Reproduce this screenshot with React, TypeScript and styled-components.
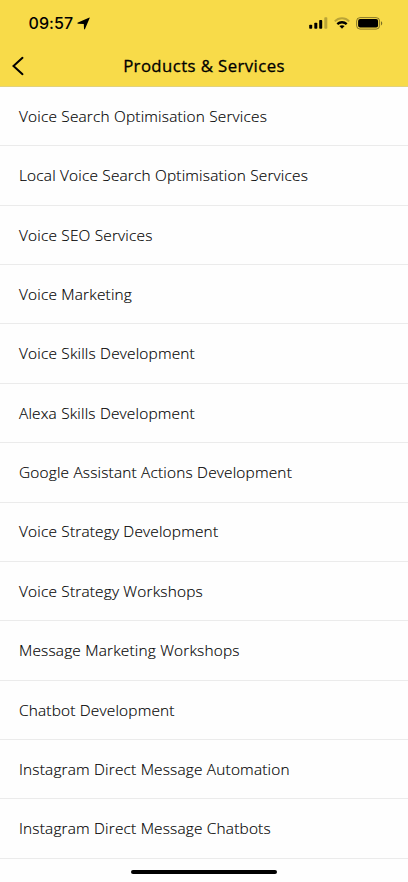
import React from "react";
import styled, { createGlobalStyle } from "styled-components";

const GlobalStyle = createGlobalStyle`
  * { box-sizing: border-box; }
  html, body { margin: 0; padding: 0; background: #fefefe; }
  body { font-family: "Open Sans", "Noto Sans", sans-serif; color: #000; }
`;

const Screen = styled.div`
  display: flex;
  flex-direction: column;
  width: 408px;
  height: 882px;
  overflow: hidden;
  background: #fefefe;
`;

const Header = styled.header`
  flex: none;
  height: 87px;
  background: #f8db49;
  border-bottom: 1px solid #e2d27c;
`;

const StatusBar = styled.div`
  display: flex;
  align-items: center;
  height: 46px;
  padding: 0 25px 0 28.5px;
`;

const Clock = styled.span`
  width: 45px;
  font: 500 16px/20px Inter, sans-serif;
  letter-spacing: 0.1px;
  white-space: nowrap;
`;

const Location = styled.svg`
  margin: 0 auto 0 3.5px;
`;

const Indicators = styled.div`
  display: flex;
  align-items: center;
  gap: 6px;
`;

const NavBar = styled.div`
  display: grid;
  grid-template-columns: 48px 1fr 48px;
  align-items: center;
  height: 39px;
`;

const BackButton = styled.button`
  display: flex;
  padding: 0 0 0 11px;
  border: 0;
  background: none;
  color: inherit;
`;

const Title = styled.h1`
  margin: 0;
  font-size: 16.8px;
  font-weight: 500;
  line-height: 22px;
  letter-spacing: 0.4px;
  -webkit-text-stroke: 0.3px #000;
  text-align: center;
`;

const List = styled.ul`
  flex: none;
  margin: 0;
  padding: 0;
  list-style: none;
`;

const Row = styled.li`
  display: flex;
  align-items: center;
  height: 59.37px;
  padding: 0.5px 19px 0;
  border-bottom: 1px solid #ebebeb;
  font-size: 15.4px;
  font-weight: 300;
  line-height: 21px;
  letter-spacing: 0.19px;
  -webkit-text-stroke: 0.15px #000;
  white-space: nowrap;
`;

const Footer = styled.footer`
  display: flex;
  flex: 1;
  justify-content: center;
  padding-top: 11px;
`;

const HomeIndicator = styled.div`
  width: 146px;
  height: 4.5px;
  border-radius: 3px;
  background: #000;
`;

const services = [
  "Voice Search Optimisation Services",
  "Local Voice Search Optimisation Services",
  "Voice SEO Services",
  "Voice Marketing",
  "Voice Skills Development",
  "Alexa Skills Development",
  "Google Assistant Actions Development",
  "Voice Strategy Development",
  "Voice Strategy Workshops",
  "Message Marketing Workshops",
  "Chatbot Development",
  "Instagram Direct Message Automation",
  "Instagram Direct Message Chatbots",
];

const SignalIcon = () => (
  <svg width="19" height="12" viewBox="0 0 19 12">
    <rect x="0.2" y="7.8" width="3" height="4" rx="0.8" />
    <rect x="5.3" y="5.7" width="3" height="6.1" rx="0.8" />
    <rect x="10.2" y="3.1" width="3" height="8.7" rx="0.8" />
    <rect x="15.3" y="0.3" width="3" height="11.5" rx="0.8" opacity="0.25" />
  </svg>
);

const WifiIcon = () => (
  <svg width="16" height="12" viewBox="0 0 16 12" fill="none" stroke="#000" strokeWidth="2">
    <path d="M.8 4.4C4.8.3 11.2.3 15.2 4.4" opacity="0.25" />
    <path d="M3.3 7.1C5.9 4.6 10.1 4.6 12.7 7.1" strokeWidth="2.3" />
    <path d="M5.4 9.1Q8 7.2 10.6 9.1L8 11.7Z" fill="#000" stroke="none" />
  </svg>
);

const BatteryIcon = () => (
  <svg width="27" height="13" viewBox="0 0 27 13">
    <rect x="0.6" y="0.6" width="23" height="11.5" rx="3.5" fill="none" stroke="#000" strokeOpacity="0.45" />
    <rect x="2.1" y="2.1" width="20" height="8.5" rx="2" />
    <path d="M25 4.3C26.7 5 26.7 7.7 25 8.4Z" opacity="0.5" />
  </svg>
);

export default function App() {
  return (
    <Screen>
      <GlobalStyle />
      <Header>
        <StatusBar>
          <Clock>09:57</Clock>
          <Location width="13" height="13" viewBox="0 0 13 13" aria-hidden="true">
            <path d="M11.9.7Q13 .1 12.6 1.3L8 12.1Q7.2 13.2 7 11.8L6.8 7 1.1 6.7Q-.3 6.3 1 5.6Z" />
          </Location>
          <Indicators>
            <SignalIcon />
            <WifiIcon />
            <BatteryIcon />
          </Indicators>
        </StatusBar>
        <NavBar>
          <BackButton aria-label="Back">
            <svg width="14" height="20" viewBox="0 0 14 20" fill="none" stroke="#000" strokeWidth="2">
              <path d="M11.5 1.8L2.5 10L11.5 18.2" strokeLinecap="round" />
            </svg>
          </BackButton>
          <Title>Products &amp; Services</Title>
        </NavBar>
      </Header>
      <List>
        {services.map((name) => (
          <Row key={name}>{name}</Row>
        ))}
      </List>
      <Footer>
        <HomeIndicator />
      </Footer>
    </Screen>
  );
}
